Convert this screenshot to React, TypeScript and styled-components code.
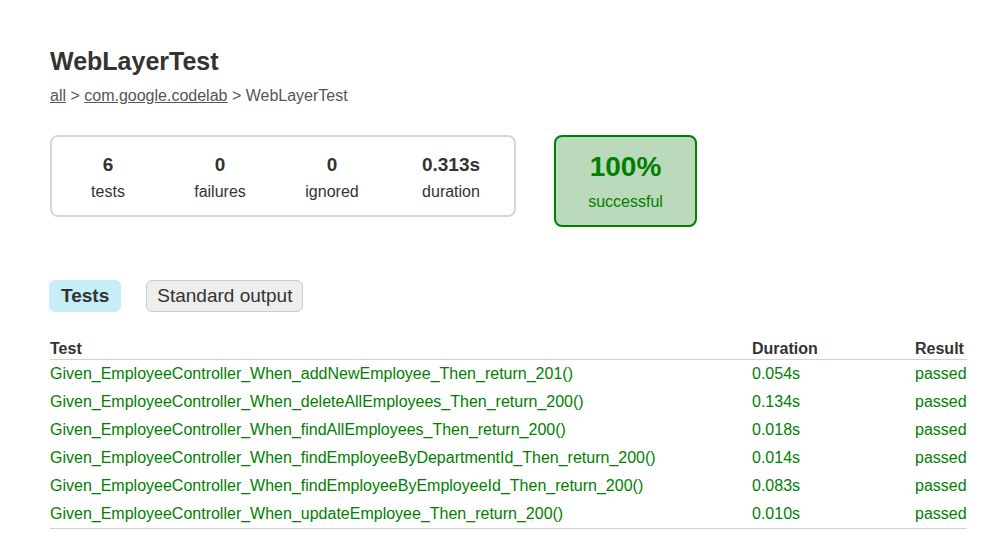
import React from "react";
import styled, { createGlobalStyle } from "styled-components";

const GlobalStyle = createGlobalStyle`
  html, body { margin: 0; padding: 0; background: #fff; }
  body {
    font-family: "Liberation Sans", Arial, Helvetica, sans-serif;
    font-size: 16px;
    color: #333;
  }
`;

const Content = styled.div`
  padding: 46px 29px 20px 50px;
`;

const Title = styled.h1`
  margin: 0;
  font-size: 25px;
  line-height: 30px;
  font-weight: bold;
  color: #333;
`;

const Breadcrumbs = styled.div`
  margin-top: 10px;
  font-size: 16px;
  line-height: 20px;
  color: #555;
`;

const Crumb = styled.a`
  color: #555;
  text-decoration: underline;
`;

const SummaryRow = styled.div`
  display: flex;
  align-items: flex-start;
  gap: 38px;
  margin-top: 29px;
`;

const SummaryBox = styled.div`
  display: grid;
  grid-template-columns: 112px 112px 112px 126px;
  width: 462px;
  padding: 15.5px 0 13.5px;
  border: 2px solid #d6d6d6;
  border-radius: 8px;
`;

const InfoBox = styled.div`
  display: flex;
  flex-direction: column;
  align-items: center;
  gap: 6px;
`;

const Counter = styled.div`
  font-size: 19px;
  line-height: 23px;
  font-weight: bold;
  color: #333;
`;

const Label = styled.div<{ $color?: string }>`
  font-size: 16px;
  line-height: 20px;
  color: ${(p) => p.$color ?? "#333"};
`;

const SuccessBox = styled.div`
  width: 139px;
  padding: 14px 0 12.5px;
  display: flex;
  flex-direction: column;
  align-items: center;
  gap: 9px;
  background: #bbd9bb;
  border: 2px solid #008000;
  border-radius: 8px;
  color: #008000;
`;

const Percent = styled.div`
  font-size: 28px;
  line-height: 32px;
  font-weight: bold;
`;

const Tabs = styled.div`
  display: flex;
  gap: 25px;
  margin-top: 53px;
  margin-left: -1px;
`;

const Tab = styled.div<{ $selected?: boolean }>`
  height: 32px;
  box-sizing: border-box;
  padding: 1px ${(p) => (p.$selected ? 11 : 10)}px 0;
  display: flex;
  align-items: center;
  font-size: 19px;
  line-height: 22px;
  font-weight: ${(p) => (p.$selected ? "bold" : "normal")};
  color: #333;
  background: ${(p) => (p.$selected ? "#c5eef6" : "#eeeeee")};
  border: 1px solid ${(p) => (p.$selected ? "#c5eef6" : "#cccccc")};
  border-radius: 6px;
`;

const Table = styled.table`
  margin-top: 27px;
  width: 917px;
  border-collapse: collapse;
  table-layout: fixed;
  border-bottom: 1px solid #d0d0d0;
`;

const Th = styled.th<{ $w: number }>`
  width: ${(p) => p.$w}px;
  text-align: left;
  padding: 0;
  font-size: 16px;
  line-height: 20px;
  font-weight: bold;
  color: #333;
  border-bottom: 1px solid #d0d0d0;
`;

const Td = styled.td`
  padding: 4px 0;
  font-size: 16px;
  line-height: 20px;
  color: #008000;
  white-space: nowrap;
`;

const tests = [
  ["Given_EmployeeController_When_addNewEmployee_Then_return_201()", "0.054s"],
  ["Given_EmployeeController_When_deleteAllEmployees_Then_return_200()", "0.134s"],
  ["Given_EmployeeController_When_findAllEmployees_Then_return_200()", "0.018s"],
  ["Given_EmployeeController_When_findEmployeeByDepartmentId_Then_return_200()", "0.014s"],
  ["Given_EmployeeController_When_findEmployeeByEmployeeId_Then_return_200()", "0.083s"],
  ["Given_EmployeeController_When_updateEmployee_Then_return_200()", "0.010s"],
];

const stats = [
  ["6", "tests"],
  ["0", "failures"],
  ["0", "ignored"],
  ["0.313s", "duration"],
];

export default function App() {
  return (
    <>
      <GlobalStyle />
      <Content>
        <Title>WebLayerTest</Title>
        <Breadcrumbs>
          <Crumb>all</Crumb> &gt; <Crumb>com.google.codelab</Crumb> &gt; WebLayerTest
        </Breadcrumbs>
        <SummaryRow>
          <SummaryBox>
            {stats.map(([v, l]) => (
              <InfoBox key={l}>
                <Counter>{v}</Counter>
                <Label>{l}</Label>
              </InfoBox>
            ))}
          </SummaryBox>
          <SuccessBox>
            <Percent>100%</Percent>
            <Label $color="#008000">successful</Label>
          </SuccessBox>
        </SummaryRow>
        <Tabs>
          <Tab $selected>Tests</Tab>
          <Tab>Standard output</Tab>
        </Tabs>
        <Table>
          <thead>
            <tr>
              <Th $w={702}>Test</Th>
              <Th $w={163}>Duration</Th>
              <Th $w={52}>Result</Th>
            </tr>
          </thead>
          <tbody>
            {tests.map(([name, d]) => (
              <tr key={name}>
                <Td>{name}</Td>
                <Td>{d}</Td>
                <Td>passed</Td>
              </tr>
            ))}
          </tbody>
        </Table>
      </Content>
    </>
  );
}
